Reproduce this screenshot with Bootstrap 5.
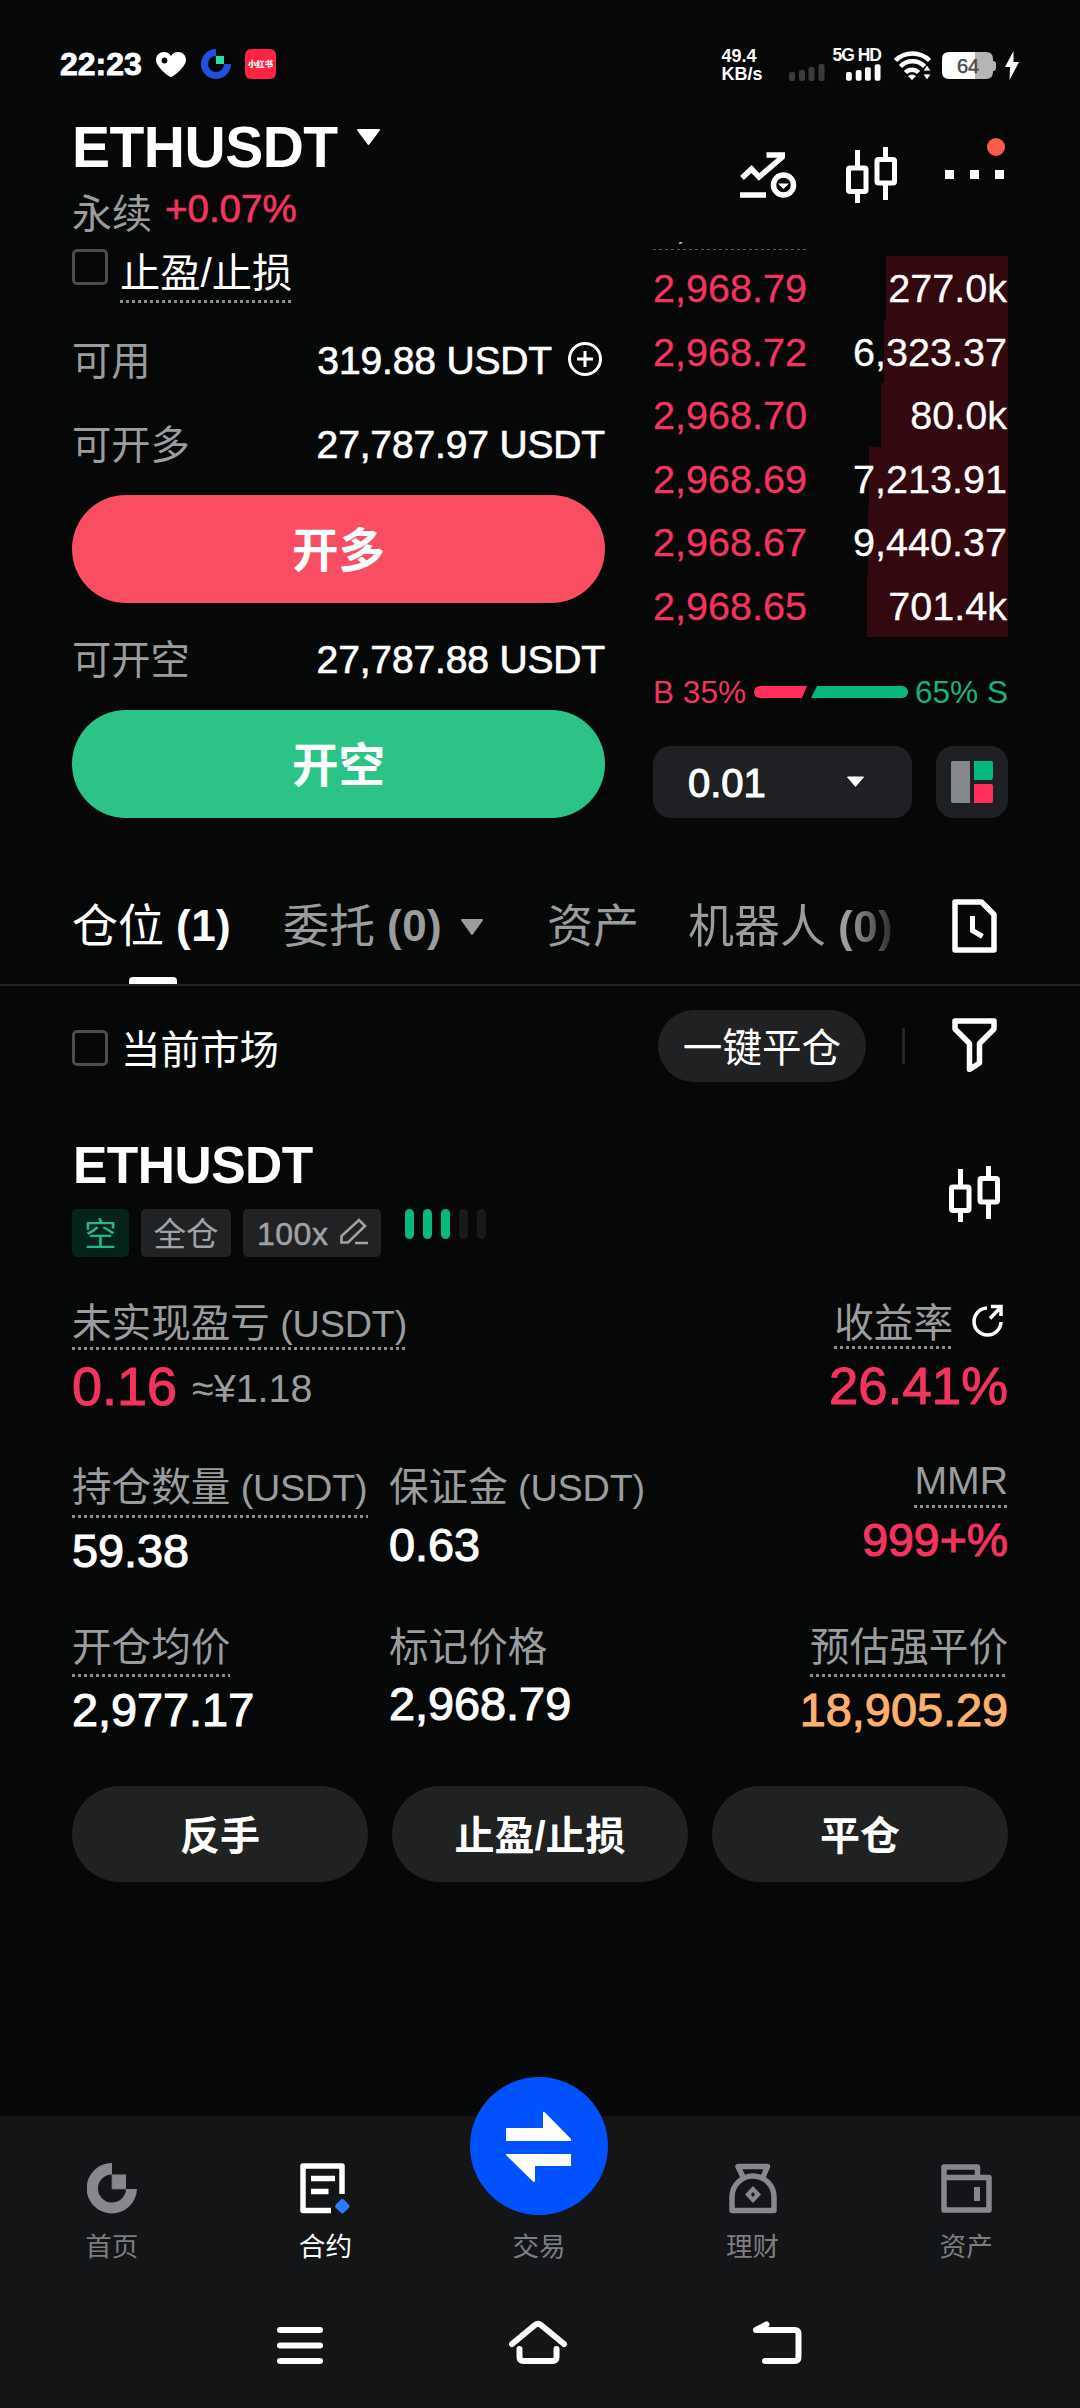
<!DOCTYPE html>
<html lang="zh-CN" data-bs-theme="dark">
<head>
<meta charset="utf-8">
<meta name="viewport" content="width=device-width, initial-scale=1">
<title>ETHUSDT 永续</title>
<link href="https://cdn.jsdelivr.net/npm/bootstrap@5.3.0/dist/css/bootstrap.min.css" rel="stylesheet">
<style>
  :root { --up:#ff2e5b; --down:#06b77e; --muted:#9a9c9e; --tile:#202122; }
  body { background:#060808; color:#fff; font-family:"Liberation Sans","Noto Sans CJK SC",sans-serif; font-size:39px; line-height:44px; min-height:2408px; font-kerning:none; }
  svg { display:block; flex:none; }
  .page-x { padding-left:72px; padding-right:72px; }
  .t-up { color:#f2345f; } .t-down { color:#16b381; } .t-muted { color:var(--muted); } .t-warn { color:#ffb06c; }
  .semi { -webkit-text-stroke:1.1px currentColor; }
  .thin-semi { -webkit-text-stroke:.7px currentColor; }
  .nowrap { white-space:nowrap; }

  .statusbar { height:116px; padding:47px 60px 0 60px; }
  .statusbar > div { height:34px; }
  .clock { font-size:32px; font-weight:700; line-height:34px; width:96px; -webkit-text-stroke:.8px #fff; stroke-linejoin:round; }
  .glogo { margin-left:15px; }
  .app-xhs { width:31px; height:30px; border-radius:6px; background:#ff2442; font-size:8.4px; font-weight:900; line-height:30px; margin-left:14px; }
  .netspeed { font-size:18px; font-weight:700; line-height:18px; width:67px; }
  .carrier-box { margin-left:8px; }
  .carrier { font-size:17.5px; font-weight:700; line-height:16px; letter-spacing:-1px; }
  .wifi { margin-left:13px; } .battery { margin-left:11px; } .bolt { margin:0 1px 0 9px; }

  .pair-title { font-size:57px; font-weight:700; line-height:62px; letter-spacing:-.5px; height:61px; }
  .pair-caret { margin:13px 0 0 18px; }
  .topbar { height:124px; }
  .sub { font-size:40px; line-height:44px; margin-top:15px; }
  .chg { font-size:38.5px; margin:-5px 0 0 13px; }
  .top-icons { padding-top:31px; }
  .chart-ico { margin:5px 49px 0 0; }
  .more { margin-left:48px; width:63px; } .more svg { margin-top:23px; }
  .alert-dot { width:18px; height:18px; background:#fc5a4c; right:3px; top:-9px; }

  .trade { height:578px; }
  .order-form { width:533px; }
  .book { width:355px; }
  .tick { width:36px; height:36px; border:3px solid #4b4c4e; border-radius:5px; flex:none; }
  .dots { display:block; height:3px; background:repeating-linear-gradient(90deg,#8c8e90 0 3px,transparent 3px 6px); }
  .tpsl { height:64px; font-size:40.3px; }
  .tpsl .tick { margin-top:9px; }
  .tpsl-label { margin:12px 0 0 12px; height:52px; }
  .tpsl-label .dots { margin-top:4px; }
  .avail { height:60px; font-size:39.3px; }
  .avail.first { margin-top:27px; margin-bottom:24px; }
  .avail .usdt { font-size:39px; letter-spacing:-.15px; }
  .plus { margin:0 3px 4px 16px; }
  .big-btn { height:108px; border-radius:54px; font-size:46.5px; font-weight:700; color:#fff; border:0; width:100%; padding:0; line-height:112px; }
  .btn-long { background:#f94e61; margin:20px 0 27px; }
  .btn-short { background:#2bc486; margin-top:20px; }

  .book-head { height:16px; }
  .book-head hr { margin:9px 0 0; width:154px; height:1px; border:0; opacity:1; background:repeating-linear-gradient(90deg,#5a5c5e 0 3px,transparent 3px 6px); }
  .speck { width:3px; height:2px; background:#aaa; left:26px; top:2px; transform:skewX(-30deg); }
  .ask { height:63.5px; font-size:39.6px; line-height:65px; padding-right:1px; -webkit-text-stroke:.3px currentColor; }
  .ask .depth { right:0; top:0; bottom:0; background:#33090f; z-index:0; }
  .ask span { position:relative; z-index:1; }
  .bs-ratio { height:40px; margin-top:35px; margin-bottom:34px; font-size:31.6px; line-height:40px; }
  .step { width:259px; height:72px; border-radius:18px; background:#1f2023; padding:2px 47px 0 35px; font-size:40px; }
  .step svg { margin-top:-2px; }
  .view { width:72px; height:72px; border-radius:18px; background:#1f2023; }

  .tabs { height:168px; border-bottom:2px solid #232526; padding-top:78px; font-size:46px; line-height:60px; }
  .tabs .cnt { font-size:44px; font-weight:700; letter-spacing:.5px; margin-left:12px; }
  .tabs .on { width:211px; } .tabs .ord { width:264px; } .tabs .asset { width:141px; }
  .tabs .on::after { content:""; position:absolute; left:57px; top:81px; width:48px; height:7px; background:#fff; border-radius:4px 4px 0 0; }
  .ord svg { margin:23px 0 0 18px; }
  .doc-ico { margin:3px 11px 0 0; }
  .fade-end { background:linear-gradient(90deg,#9a9c9e 78%,#2c2d2e 100%); -webkit-background-clip:text; background-clip:text; color:transparent !important; }
  .tool { padding-top:24px; font-size:39.5px; }
  .tool .tick { margin-top:3px; } .tool-label { margin:7px 0 0 13px; }
  .pill-s { width:208px; height:72px; border-radius:36px; background:var(--tile); font-size:39.6px; line-height:76px; text-align:center; margin-right:36px; }
  .sep { width:3px; height:36px; background:#232526; margin-right:47px; }
  .funnel { margin:-2px 11px 0 0; }

  .pos { margin-top:53px; height:122px; }
  .pos-title { font-size:51.5px; font-weight:700; line-height:60px; letter-spacing:-.5px; padding-left:1px; }
  .pos-candle { margin:31px 8px 0 0; }
  .tags { margin-top:14px; font-size:32.5px; line-height:52px; }
  .tag-x { height:48px; border-radius:5px; background:#202224; color:#a0a2a4; text-align:center; }
  .tag-s { width:57px; background:#04231a; color:#2bb486; }
  .tag-c { width:90px; margin:0 12px; }
  .tag-l { width:138px; font-size:32px; padding:0 13px 0 14px; letter-spacing:.5px; line-height:50px; -webkit-text-stroke:.5px currentColor; }
  .tag-l svg { margin-top:9px; }
  .meter { margin-left:24px; gap:9px; } .meter i { width:9px; height:30px; border-radius:5px; background:var(--down); } .meter i.off { background:#17191a; }

  .pnl { margin-top:44px; height:115px; }
  .fs-cn { font-size:39.6px; }
  .lat { font-size:37.8px; letter-spacing:-.2px; }
  .pnl .dots { margin:1px 0 7px; }
  .pnl-val { font-size:54px; line-height:59px; }
  .pct-val { font-size:52.6px; line-height:60px; letter-spacing:.1px; }
  .pnl-cny { font-size:39.4px; line-height:62px; margin-left:15px; }
  .share-ico { margin:3px 4px 0 19px; }
  .stats { height:159px; } .stats.first { padding-top:49px; height:209px; }
  .c1 { width:317px; } .c2 { width:290px; } .c3 { flex:1; text-align:right; }
  .stats .dots { margin:5px 0 5px; }
  .stats:not(.first) .dots { margin:5px 0 5px; }
  .val { font-size:46.8px; line-height:56px; }
  .c2 .val { margin-top:7px; }
  .mmr { margin-top:-6px; } .mmr .lbl { font-size:39.2px; } .stats .mmr .dots { margin:2px 0 4px; } .mmr .val { font-size:46.4px; }
  .acts { margin-top:2px; gap:24px; }
  .act { flex:1; height:96px; border-radius:48px; background:#202121; color:#fff; border:0; font-size:40px; font-weight:700; line-height:101px; padding:0; }

  .dock { height:292px; background:#141517; padding:0 7px 0 5px; }
  .dock-item { flex:1; color:#7c7e80; font-size:26.6px; line-height:32px; padding-top:47px; height:150px; }
  .dock-item svg { margin-bottom:17px; }
  .dock-item.now { color:#fff; }
  .dock-item.swap { padding-top:0; margin-top:-40px; height:190px; } .dock-item.swap svg { margin-bottom:15px; }
  .sys { margin-top:50px; padding:0 271px 0 272px; }
  .sys-menu { margin-top:10px; } .sys-home { margin-top:4px; } .sys-back { margin-top:5px; }
</style>
</head>
<body class="d-flex flex-column m-0">
<svg width="0" height="0" class="position-absolute">
  <symbol id="candles" viewBox="0 0 51 56"><g fill="none" stroke="#fff" stroke-width="5"><rect x="2.5" y="21" width="17.500" height="23.500" rx="1.500"/><path d="M11.500 3v17M11.500 45v11M39.500 0v11M39.500 37v16"/><rect x="31" y="12.500" width="17.500" height="23.500" rx="1.500"/></g></symbol>
</svg>

<div class="statusbar d-flex justify-content-between">
  <div class="d-flex align-items-center">
    <span class="clock">22:23</span>
    <svg width="30" height="25" viewBox="0 0 30 25"><path d="M15 25C11 24 0 14 0 8 0 3 3.500 0 8 0c3 0 5.500 1.500 7 4 1.500-2.500 4-4 7-4 4.500 0 8 3 8 8 0 6-11 16-15 17z" fill="#fff"/><circle cx="8.500" cy="8.500" r="2.900" fill="#060808"/></svg>
    <svg class="glogo" width="30" height="30" viewBox="0 0 30 30"><path d="M15 0a15 15 0 1 0 15 15h-7a8 8 0 1 1-8-8z" fill="#2150e0"/><path d="M15 7h8v8h-8z" fill="#25e0a0"/></svg>
    <div class="app-xhs text-center nowrap">小红书</div>
  </div>
  <div class="d-flex align-items-start">
    <div class="netspeed text-start">49.4<br>KB/s</div>
    <svg class="align-self-end" width="36" height="17" viewBox="0 0 36 17" fill="#3a3b3c"><rect y="8" width="6" height="9" rx="2"/><rect x="10" y="6" width="6" height="11" rx="2"/><rect x="19.500" y="3" width="6" height="14" rx="2"/><rect x="29.500" width="6" height="17" rx="2"/></svg>
    <div class="carrier-box d-flex flex-column align-items-end justify-content-between h-100">
      <span class="carrier nowrap">5G HD</span>
      <svg width="35" height="17" viewBox="0 0 36 17" fill="#fff"><rect y="8" width="6" height="9" rx="2"/><rect x="10" y="6" width="6" height="11" rx="2"/><rect x="19.500" y="3" width="6" height="14" rx="2"/><rect x="29.500" width="6" height="17" rx="2"/></svg>
    </div>
    <svg class="wifi mt-1" width="37" height="30" viewBox="0 0 37 30"><g fill="none" stroke="#fff" stroke-width="4.600"><path d="M1.500 9.500a24 24 0 0 1 34 0M6.500 15.500a16.500 16.500 0 0 1 24 0M11.500 21.500a9 9 0 0 1 13 0"/></g><path d="M14 25q4-3 8 0l-4 4z" fill="#fff"/><path d="M33 14l4 6h-8zM33 29l4-6h-8z" fill="#fff" stroke="#060808" stroke-width=".8"/></svg>
    <svg class="battery mt-1" width="54" height="29" viewBox="0 0 54 29"><path d="M44 1q7 0 7 7v2q3 0 3 3v4q0 3-3 3v1q0 7-7 7H33V1z" fill="#b5b5b5"/><path d="M33 1H7Q0 1 0 8v13q0 7 7 7h26z" fill="#fff"/><text x="26" y="22" font-size="20" text-anchor="middle" fill="#4a4a4a" stroke="#4a4a4a" stroke-width=".5">64</text></svg>
    <svg class="bolt mt-1" width="14" height="29" viewBox="0 0 14 29"><path d="M8.500 0L0 16h5L4.500 29 14 11H8.500z" fill="#fff"/></svg>
  </div>
</div>

<header class="topbar page-x d-flex justify-content-between">
  <div>
    <div class="d-flex"><span class="pair-title">ETHUSDT</span>
      <svg class="pair-caret" width="25" height="17" viewBox="0 0 25 17"><path d="M2 1h21l-10.500 14z" fill="#fff" stroke="#fff" stroke-width="2" stroke-linejoin="round"/></svg></div>
    <div class="sub d-flex"><span class="t-muted">永续</span><span class="chg t-up thin-semi">+0.07%</span></div>
  </div>
  <div class="top-icons d-flex align-items-start">
    <svg class="chart-ico" width="57" height="46" viewBox="0 0 57 46"><g fill="none" stroke="#fff" stroke-width="5.500"><path d="M2 26l9.500-9L19 25 43 4.500M26.500 3H45M0 43h26"/><circle cx="43.500" cy="33" r="10"/></g><path d="M38 31.500h11L43.500 37z" fill="#fff"/></svg>
    <svg width="51" height="56"><use href="#candles"/></svg>
    <div class="more position-relative">
      <svg width="60" height="9" viewBox="0 0 60 9" fill="#fff"><path d="M0 0h9v9H0zM25 0h9v9h-9zM50 0h9v9h-9z"/></svg>
      <span class="alert-dot rounded-circle position-absolute"></span>
    </div>
  </div>
</header>

<main>
<section class="trade page-x d-flex justify-content-between">
  <div class="order-form">
    <div class="tpsl d-flex"><span class="tick"></span><div class="tpsl-label nowrap">止盈/止损<span class="dots"></span></div></div>
    <div class="avail first d-flex align-items-center justify-content-between">
      <span class="t-muted">可用</span>
      <span class="d-flex align-items-center usdt thin-semi">319.88 USDT
        <svg class="plus" width="34" height="34" viewBox="0 0 34 34"><g fill="none" stroke="#fff" stroke-width="3"><circle cx="17" cy="17" r="15.500"/><path d="M17 9v16M9 17h16"/></g></svg></span>
    </div>
    <div class="avail d-flex align-items-center justify-content-between"><span class="t-muted">可开多</span><span class="usdt thin-semi">27,787.97 USDT</span></div>
    <button class="btn big-btn btn-long">开多</button>
    <div class="avail d-flex align-items-center justify-content-between"><span class="t-muted">可开空</span><span class="usdt thin-semi">27,787.88 USDT</span></div>
    <button class="btn big-btn btn-short">开空</button>
  </div>

  <div class="book">
    <div class="book-head position-relative"><span class="speck position-absolute"></span><hr class="d-inline-block align-top"></div>
    <div class="ask d-flex justify-content-between position-relative"><div class="depth position-absolute" style="width:122px"></div><span class="t-up">2,968.79</span><span>277.0k</span></div>
    <div class="ask d-flex justify-content-between position-relative"><div class="depth position-absolute" style="width:124px"></div><span class="t-up">2,968.72</span><span>6,323.37</span></div>
    <div class="ask d-flex justify-content-between position-relative"><div class="depth position-absolute" style="width:127px"></div><span class="t-up">2,968.70</span><span>80.0k</span></div>
    <div class="ask d-flex justify-content-between position-relative"><div class="depth position-absolute" style="width:139px"></div><span class="t-up">2,968.69</span><span>7,213.91</span></div>
    <div class="ask d-flex justify-content-between position-relative"><div class="depth position-absolute" style="width:140px"></div><span class="t-up">2,968.67</span><span>9,440.37</span></div>
    <div class="ask d-flex justify-content-between position-relative"><div class="depth position-absolute" style="width:141px"></div><span class="t-up">2,968.65</span><span>701.4k</span></div>
    <div class="bs-ratio d-flex align-items-center justify-content-between nowrap">
      <span class="t-up">B 35%</span>
      <svg width="154" height="12" viewBox="0 0 154 12"><path d="M6 0h47l-5 12H6A6 6 0 0 1 6 0z" fill="#ff2e5b"/><path d="M63 0h85a6 6 0 0 1 0 12H57z" fill="#06b77e"/></svg>
      <span class="t-down">65% S</span>
    </div>
    <div class="d-flex justify-content-between">
      <div class="step d-flex align-items-center justify-content-between"><span class="semi">0.01</span><svg width="19" height="12" viewBox="0 0 19 12"><path d="M1.500 1h16l-8 9.500z" fill="#fff" stroke="#fff" stroke-linejoin="round"/></svg></div>
      <div class="view d-flex align-items-center justify-content-center"><svg width="42" height="42" viewBox="0 0 42 42"><path d="M2 0h17v42H2q-2 0-2-2V2q0-2 2-2z" fill="#86898c"/><path d="M23 0h17q2 0 2 2v14q0 3-2 3H23z" fill="#06b77e"/><path d="M23 23h17q2 0 2 2v15q0 2-2 2H23z" fill="#ff2e5b"/></svg></div>
    </div>
  </div>
</section>

<nav class="tabs page-x d-flex nowrap">
  <div class="on position-relative d-flex">仓位<span class="cnt">(1)</span></div>
  <div class="ord t-muted d-flex">委托<span class="cnt">(0)</span><svg width="24" height="17" viewBox="0 0 24 17"><path d="M2 1h20L12 15z" fill="#9a9c9e" stroke="#9a9c9e" stroke-width="2" stroke-linejoin="round"/></svg></div>
  <div class="asset t-muted">资产</div>
  <div class="fade-end me-auto">机器人<span class="cnt">(0)</span></div>
  <svg class="doc-ico" width="45" height="54" viewBox="0 0 45 54"><g fill="none" stroke="#fff" stroke-width="5.500" stroke-linejoin="round"><path d="M3 3h26.500L42 15.500V51H3z"/><path d="M20.500 17v14.500l10 6" stroke-linejoin="miter" stroke-width="5"/></g></svg>
</nav>

<section class="tool page-x d-flex align-items-center">
  <span class="tick"></span><span class="tool-label me-auto">当前市场</span>
  <span class="pill-s nowrap">一键平仓</span><span class="sep"></span>
  <svg class="funnel" width="45" height="54" viewBox="0 0 45 54"><path d="M3 3h39v8L27.500 25.500V45l-10 6.500V25.500L3 11z" fill="none" stroke="#fff" stroke-width="5.500" stroke-linejoin="round"/></svg>
</section>

<section class="pos page-x d-flex justify-content-between">
  <div>
    <div class="pos-title">ETHUSDT</div>
    <div class="tags d-flex nowrap">
      <span class="tag-x tag-s">空</span><span class="tag-x tag-c">全仓</span>
      <span class="tag-x tag-l d-flex justify-content-between">100x<svg width="28" height="27" viewBox="0 0 28 27"><path d="M1.500 24.500V18L19 2l6 6L8 24.500zM15 25h13" fill="none" stroke="#a0a2a4" stroke-width="2.600"/></svg></span>
      <span class="meter d-flex"><i></i><i></i><i></i><i class="off"></i><i class="off"></i></span>
    </div>
  </div>
  <svg class="pos-candle" width="51" height="56"><use href="#candles"/></svg>
</section>

<section class="pnl page-x d-flex justify-content-between nowrap">
  <div>
    <div class="d-inline-block align-top t-muted fs-cn">未实现盈亏<span class="lat"> (USDT)</span><span class="dots"></span></div>
    <div class="d-flex"><span class="pnl-val t-up semi">0.16</span><span class="pnl-cny t-muted">≈¥1.18</span></div>
  </div>
  <div class="text-end">
    <div class="d-flex justify-content-end t-muted fs-cn"><div>收益率<span class="dots"></span></div>
      <svg class="share-ico" width="32" height="33" viewBox="0 0 32 33"><g fill="none" stroke="#fff" stroke-width="3.500"><path d="M15 4a13.500 13.500 0 1 0 14 14M19 2.500h10V12M18 14.500L29 3"/></g></svg></div>
    <div class="pct-val t-up semi">26.41%</div>
  </div>
</section>

<section class="stats first page-x d-flex nowrap">
  <div class="c1"><div class="d-inline-block align-top t-muted fs-cn">持仓数量<span class="lat"> (USDT)</span><span class="dots"></span></div><div class="val semi">59.38</div></div>
  <div class="c2"><div class="t-muted fs-cn">保证金<span class="lat"> (USDT)</span></div><div class="val semi">0.63</div></div>
  <div class="c3 mmr"><div class="d-inline-block align-top t-muted lbl">MMR<span class="dots"></span></div><div class="val t-up semi">999+%</div></div>
</section>
<section class="stats page-x d-flex nowrap">
  <div class="c1"><div class="d-inline-block align-top t-muted fs-cn">开仓均价<span class="dots"></span></div><div class="val semi">2,977.17</div></div>
  <div class="c2"><div class="t-muted fs-cn">标记价格</div><div class="val semi">2,968.79</div></div>
  <div class="c3"><div class="d-inline-block align-top t-muted fs-cn">预估强平价<span class="dots"></span></div><div class="val t-warn semi">18,905.29</div></div>
</section>

<section class="acts page-x d-flex">
  <button class="btn act">反手</button><button class="btn act">止盈/止损</button><button class="btn act">平仓</button>
</section>
</main>

<footer class="dock mt-auto">
  <div class="d-flex">
    <div class="dock-item d-flex flex-column align-items-center"><svg width="50" height="51" viewBox="0 0 50 51"><path d="M25 0a25.200 25.200 0 1 0 25 26H39a14 14 0 1 1-14-14.500z" fill="#86888b"/><path d="M25 11.500h14V26H25z" fill="#86888b"/><path d="M25 11.500V26h14" fill="none" stroke="#6c6e71" stroke-width=".8"/></svg>首页</div>
    <div class="dock-item now d-flex flex-column align-items-center"><svg width="50" height="51" viewBox="0 0 50 51"><path d="M31 47.500H3V3h39v28M11 15.500h24M11 28.500h17.500" fill="none" stroke="#fff" stroke-width="5.500" stroke-linejoin="round"/><rect x="36.500" y="37.500" width="11.500" height="11.500" rx="2.500" transform="rotate(45 42.300 43.300)" fill="#2a7bff"/></svg>合约</div>
    <div class="dock-item swap d-flex flex-column align-items-center"><svg width="138" height="140" viewBox="0 0 138 140"><circle cx="69" cy="70" r="69" fill="#0052ff"/><path d="M36 52h37V37q0-2 2-.5L101 63v2H36zM101 90H65v14q0 3-2 1.500L36 79v-1h65z" fill="#fff"/></svg>交易</div>
    <div class="dock-item d-flex flex-column align-items-center"><svg width="48" height="51" viewBox="0 0 48 51"><g fill="none" stroke="#86888b" stroke-width="5.500" stroke-linejoin="round"><path d="M3 47.500V34a21 21 0 0 1 42 0v13.500zM14 14L9 3.500h29.500L34 14"/></g><path d="M24 23l8 8.500-8 8.500-8-8.500z" fill="#86888b"/><path d="M24 29l2 2.500-2 2.500-2-2.500z" fill="#141517"/></svg>理财</div>
    <div class="dock-item d-flex flex-column align-items-center"><svg width="51" height="51" viewBox="0 0 51 51"><g fill="none" stroke="#86888b" stroke-width="5.500" stroke-linejoin="round"><path d="M3 14.500V47h45V14.500zM3 15V4h33.500v10"/></g><path d="M33 24h6v14h-6z" fill="#86888b"/></svg>资产</div>
  </div>
  <div class="sys d-flex justify-content-between">
    <svg class="sys-menu" width="46" height="38" viewBox="0 0 46 38"><path d="M3 4h40M3 19.500h40M3 35h40" stroke="#fff" stroke-width="6" stroke-linecap="round"/></svg>
    <svg class="sys-home" width="58" height="44" viewBox="0 0 58 44"><path d="M3 24L26 5q3-2.500 6 0l23 19M10.500 29v8q0 4 4 4h29q4 0 4-4v-8" fill="none" stroke="#fff" stroke-width="6" stroke-linecap="round"/></svg>
    <svg class="sys-back" width="49" height="43" viewBox="0 0 49 43"><path d="M13.500 3.500L3 9h38.500q4 0 4 4v23q0 4-4 4H12" fill="none" stroke="#fff" stroke-width="6" stroke-linecap="round" stroke-linejoin="round"/></svg>
  </div>
</footer>
<script src="https://cdn.jsdelivr.net/npm/bootstrap@5.3.0/dist/js/bootstrap.bundle.min.js"></script>
</body>
</html>
